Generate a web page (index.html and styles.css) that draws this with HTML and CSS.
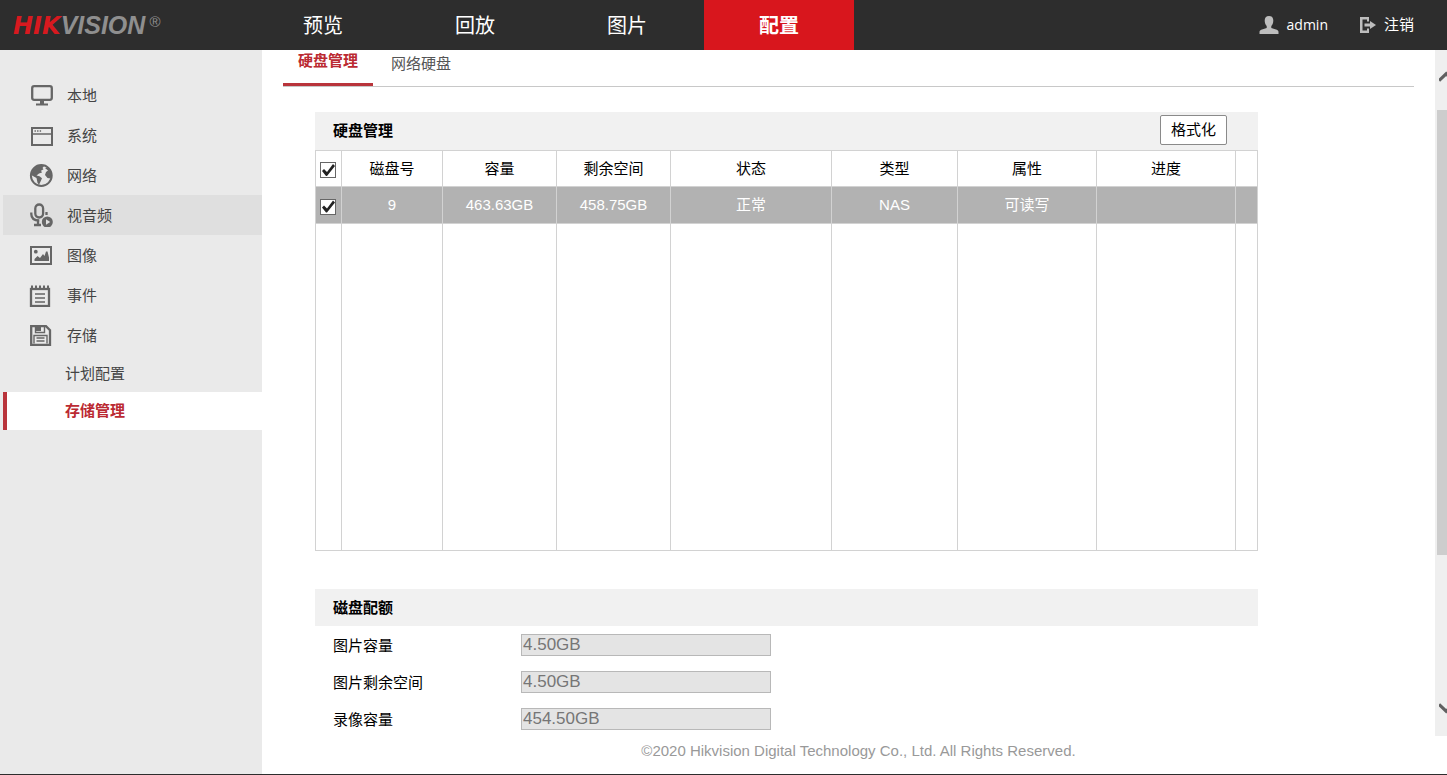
FILE: index.html
```html
<!DOCTYPE html>
<html lang="zh-CN">
<head>
<meta charset="utf-8">
<title>HIKVISION</title>
<link rel="stylesheet" href="styles.css">
</head>
<body>
<header class="topbar">
  <div class="logo"><span class="logo-red">HIK</span><span>VISION</span><span class="logo-mark">®</span></div>
  <nav class="topnav">
    <a href="#">预览</a>
    <a href="#">回放</a>
    <a href="#">图片</a>
    <a href="#" class="active">配置</a>
  </nav>
  <div class="account">
    <a href="#" class="account-link">
      <svg width="20" height="18" viewBox="0 0 20 18"><path fill="#bdbdbd" d="M10 0c3 0 4.300 2 4.300 4.600 0 2.400-.8 4.300-2 5.400v2l5.500 1.700c1.200.5 1.700 1.200 1.700 2.300v2H.5v-2c0-1.100.6-1.800 1.700-2.300L7.700 12v-2c-1.200-1.100-2-3-2-5.400C5.700 2 7 0 10 0z"/></svg>
      <span class="user">admin</span>
    </a>
    <a href="#" class="account-link logout">
      <svg width="16" height="16" viewBox="0 0 16 16"><path fill="#bdbdbd" d="M0 0h9v4.500H7V2.500H2.500v11H7v-2h2V16H0z M4.500 6.500h5.500V4l6 4-6 4V9.500H4.500z"/></svg>
      <span>注销</span>
    </a>
  </div>
</header>
<div class="body">
  <aside class="sidebar">
    <a href="#" class="item">
      <svg class="icon" viewBox="0 0 24 24" fill="none" stroke="#666" stroke-width="2.300"><rect x="3.200" y="3.200" width="19.600" height="13.600" rx="2"/><path d="M7 21.500h12" stroke-width="2"/><path d="M11 17h4v4h-4z" fill="#666" stroke="none"/></svg>
      <span>本地</span>
    </a>
    <a href="#" class="item">
      <svg class="icon" viewBox="0 0 24 24" fill="none" stroke="#666" stroke-width="2"><path d="M3 5h20v17H3z"/><path d="M3 11h20" stroke-width="1.500"/><path d="M5.500 8h7" stroke-width="1.400" stroke-dasharray="1.400 1.200"/></svg>
      <span>系统</span>
    </a>
    <a href="#" class="item">
      <svg class="icon" viewBox="0 0 24 24"><circle cx="12.300" cy="12.500" r="10.400" fill="#e6e6e6" stroke="#666" stroke-width="2"/><path fill="#666" d="M3 9C4.500 5 8 2.500 12 2.300l3 .7-1.500 2 1 1.200-2.500 1.500 1 1.800-3 1-2.500 2 3 .7 2.500 2-1.300 3-1.700 3.500-1.500-2L7.500 15 3 12.500zM16 5l3-.5c2 2 3.500 4.500 3.700 7.500l-1.200 3.500-3-.5-2.500-3 1-3 2-1.500z"/></svg>
      <span>网络</span>
    </a>
    <a href="#" class="item hover">
      <svg class="icon" viewBox="0 0 24 24" fill="none" stroke="#666" stroke-width="2.300"><rect x="6.300" y="1.500" width="7.800" height="13" rx="3.900"/><path d="M2.300 9.500v1.500c0 4.500 3.500 6.500 8 6.500M17.500 9v3M9 17v4M5 22h7"/><circle cx="18.300" cy="19" r="5.500" fill="#666" stroke="none"/><path d="M17 16.200v5.600l4.200-2.800z" fill="#e0e0e0" stroke="none"/></svg>
      <span>视音频</span>
    </a>
    <a href="#" class="item">
      <svg class="icon" viewBox="0 0 24 24"><rect x="2" y="4" width="20" height="17" fill="none" stroke="#666" stroke-width="2"/><circle cx="6.800" cy="8.700" r="1.900" fill="#666"/><path fill="#666" d="M5.500 18v-2l3-3 2.500 2 3-4 1.500 2 1.500-4.500h1.500l1.500 6V18z"/></svg>
      <span>图像</span>
    </a>
    <a href="#" class="item">
      <svg class="icon" viewBox="0 0 24 24" fill="none" stroke="#666"><rect x="2" y="6" width="18" height="17" stroke-width="2.300"/><path stroke-width="2" d="M3 2.500v3M7 2.500v3M11 2.500v3M15 2.500v3M19 2.500v3"/><path stroke-width="1.400" d="M6 11h10M6 15h10M6 19h10"/></svg>
      <span>事件</span>
    </a>
    <a href="#" class="item">
      <svg class="icon" viewBox="0 0 24 24" fill="none" stroke="#666"><path stroke-width="2.300" d="M2.200 3.200h14.800l4 4v14.600H2.200z"/><path stroke-width="1.400" d="M6.500 4v5.500h9V4M5 20.500v-8h13v8M7.500 15h8M7.500 18h8"/><path fill="#666" stroke="none" d="M7 4h5v4H7z"/></svg>
      <span>存储</span>
    </a>
    <a href="#" class="subitem">计划配置</a>
    <a href="#" class="subitem current">存储管理</a>
  </aside>
  <div class="content">
    <div class="viewport">
      <main class="page">
        <nav class="tabs">
          <a href="#" class="tab selected">硬盘管理</a>
          <a href="#" class="tab">网络硬盘</a>
        </nav>
        <section class="panel">
          <div class="panel-head">
            <h2>硬盘管理</h2>
            <button type="button" class="format">格式化</button>
          </div>
          <table class="disks">
            <colgroup><col class="c-check"><col class="c-id"><col class="c-size"><col class="c-size"><col class="c-state"><col class="c-type"><col class="c-wide"><col class="c-wide"><col class="c-end"></colgroup>
            <thead>
              <tr><th><input type="checkbox" aria-label="全选" checked></th><th>磁盘号</th><th>容量</th><th>剩余空间</th><th>状态</th><th>类型</th><th>属性</th><th>进度</th><th></th></tr>
            </thead>
            <tbody>
              <tr class="picked"><td><input type="checkbox" aria-label="磁盘 9" checked></td><td>9</td><td>463.63GB</td><td>458.75GB</td><td>正常</td><td>NAS</td><td>可读写</td><td></td><td></td></tr>
              <tr class="filler"><td></td><td></td><td></td><td></td><td></td><td></td><td></td><td></td><td></td></tr>
            </tbody>
          </table>
        </section>
        <section class="panel quota">
          <div class="panel-head"><h2>磁盘配额</h2></div>
          <div class="field"><label for="pic-size">图片容量</label><input id="pic-size" type="text" value="4.50GB" disabled></div>
          <div class="field"><label for="pic-free">图片剩余空间</label><input id="pic-free" type="text" value="4.50GB" disabled></div>
          <div class="field"><label for="rec-size">录像容量</label><input id="rec-size" type="text" value="454.50GB" disabled></div>
        </section>
      </main>
      <div class="scrollbar">
        <svg class="arrow" width="10" height="14" viewBox="0 0 10 14"><path d="M0 11.500L9 3l9 8.500" fill="none" stroke="#606060" stroke-width="4"/></svg>
        <div class="thumb"></div>
        <svg class="arrow" width="10" height="14" viewBox="0 0 10 14"><path d="M0 2.500L9 11l9-8.500" fill="none" stroke="#606060" stroke-width="4"/></svg>
      </div>
    </div>
    <footer class="footer">©2020 Hikvision Digital Technology Co., Ltd. All Rights Reserved.</footer>
  </div>
</div>
</body>
</html>
```
FILE: styles.css
```css
* {
  box-sizing: border-box;
}

body {
  margin: 0;
  height: 100vh;
  display: flex;
  flex-direction: column;
  overflow: hidden;
  border-bottom: 1px solid #2d2d2d;
  background: #fff;
  color: #000;
  font: 15px/20px "Liberation Sans", "Noto Sans CJK SC", sans-serif;
}

a {
  color: inherit;
  text-decoration: none;
}

.topbar {
  flex: none;
  display: flex;
  height: 50px;
  background: #2d2d2d;
  color: #fff;
}

.logo {
  display: flex;
  align-items: baseline;
  width: 248px;
  padding-left: 13px;
  color: #8f8f8f;
  font-size: 25px;
  line-height: 50px;
  font-weight: bold;
  font-style: italic;
}

.logo-red {
  color: #d7191f;
  font-family: "DejaVu Sans", sans-serif;
  font-size: 24px;
}

.logo-mark {
  align-self: flex-start;
  padding-left: 4px;
  font-size: 15px;
  line-height: 44px;
  font-weight: normal;
  font-style: normal;
}

.topnav {
  display: flex;
  gap: 2px;
}

.topnav a {
  width: 150px;
  height: 50px;
  text-align: center;
  font-size: 20px;
  line-height: 52px;
}

.topnav .active {
  background: #d8161d;
  font-weight: bold;
}

.account {
  display: flex;
  gap: 32px;
  margin-left: auto;
  padding-right: 33px;
}

.account-link {
  display: flex;
  align-items: center;
  gap: 8px;
}

.user {
  font-family: "Open Sans", sans-serif;
  font-size: 14px;
}

.body {
  flex: 1;
  display: flex;
  min-height: 0;
}

.sidebar {
  flex: none;
  width: 262px;
  padding: 25px 0 0 3px;
  background: #eaeaea;
  color: #444;
}

.item {
  display: flex;
  align-items: center;
  gap: 14px;
  height: 40px;
  padding-left: 26px;
}

.item span {
  padding-top: 2px;
}

.item.hover {
  background: #dfdfdf;
}

.icon {
  width: 24px;
  height: 24px;
}

.subitem {
  display: block;
  height: 37px;
  padding-left: 62px;
  line-height: 38px;
}

.current {
  height: 38px;
  padding-left: 58px;
  border-left: 4px solid #b9343b;
  background: #fff;
  color: #bb2a32;
  font-weight: bold;
}

.content {
  flex: 1;
  display: flex;
  flex-direction: column;
  min-width: 0;
}

.viewport {
  flex: 1;
  display: flex;
  min-height: 0;
}

.page {
  flex: 1;
  min-width: 0;
  padding: 0 21px;
  overflow: hidden;
}

.tabs {
  display: flex;
  height: 37px;
  border-bottom: 1px solid #c8c8c8;
}

.tab {
  width: 90px;
  height: 36px;
  padding-top: 4px;
  text-align: center;
  color: #555;
}

.tab.selected {
  margin-right: 3px;
  padding-top: 1px;
  border-bottom: 3px solid #b9343b;
  color: #bb2a32;
  font-weight: bold;
}

.panel {
  max-width: 975px;
  padding: 25px 0 0 32px;
}

.panel-head {
  display: flex;
  align-items: center;
  justify-content: space-between;
  height: 38px;
  padding: 0 31px 0 18px;
  background: #f1f1f1;
}

.panel-head h2 {
  margin: 0;
  font-size: 15px;
}

.format {
  width: 67px;
  height: 30px;
  margin-bottom: 2px;
  padding: 0;
  border: 1px solid #8a8a8a;
  border-radius: 2px;
  background: #fff;
  color: #000;
  font: inherit;
}

.disks {
  width: 100%;
  table-layout: fixed;
  border-spacing: 0;
  border: solid #d2d2d2;
  border-width: 1px 0 0 1px;
}

.c-check { width: 26px; }
.c-id { width: 101px; }
.c-size { width: 114px; }
.c-state { width: 161px; }
.c-type { width: 126px; }
.c-wide { width: 139px; }
.c-end { width: 22px; }

.disks th,
.disks td {
  height: 36px;
  padding: 0;
  border: solid #d2d2d2;
  border-width: 0 1px 1px 0;
  text-align: center;
  font-weight: normal;
}

.disks .picked td {
  height: 37px;
  background: #b2b2b2;
  color: #fff;
}

.disks .filler td {
  height: 327px;
}

.disks input {
  appearance: none;
  display: block;
  width: 16px;
  height: 16px;
  margin: 3px 0 0 4px;
  border: 1px solid #666;
  background: #fff;
}

.disks input:checked::before {
  content: "";
  display: block;
  width: 14px;
  height: 14px;
  background: #222;
  clip-path: polygon(1px 8px, 3px 6px, 6px 9px, 12px 1px, 14px 3px, 6px 13px, 5px 13px);
}

.quota {
  padding-top: 38px;
}

.quota .panel-head {
  height: 37px;
}

.field {
  display: flex;
  align-items: center;
  height: 37px;
  padding-left: 18px;
}

.field label {
  width: 188px;
  padding-top: 2px;
}

.field input {
  width: 250px;
  height: 22px;
  padding: 0 1px;
  border: 1px solid #b8b8b8;
  border-radius: 0;
  background: #e4e4e4;
  color: #767676;
  font: 17px "Liberation Sans", sans-serif;
}

.scrollbar {
  flex: none;
  display: flex;
  flex-direction: column;
  width: 12px;
  padding: 20px 0 21px 2px;
  background: #efefef;
}

.arrow {
  flex: none;
  padding-left: 2px;
}

.thumb {
  flex: 1;
  margin: 26px 0 146px;
  background: #cdcdcd;
}

.footer {
  flex: none;
  height: 38px;
  padding: 5px 0 0 8px;
  text-align: center;
  color: #999;
}
```
